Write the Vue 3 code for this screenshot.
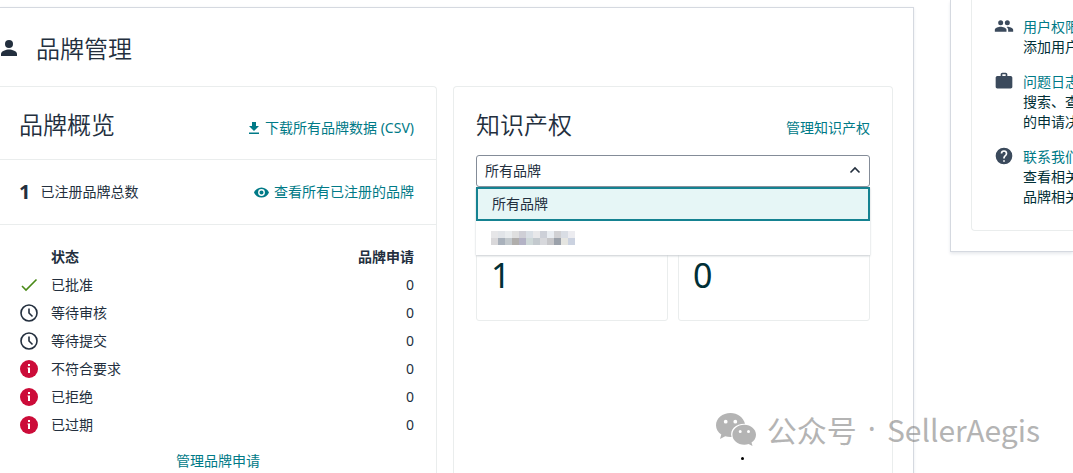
<template>
  <div class="page">
    <main class="panel">
      <header class="panel-header">
        <svg class="icon-person" viewBox="0 0 18 18"><circle cx="9" cy="5" r="4" /><path d="M1 17v-2c0-3 5-4.500 8-4.500s8 1.500 8 4.500v2z" /></svg>
        <h1>品牌管理</h1>
      </header>

      <div class="cards">
        <section class="card overview">
          <div class="card-row card-title">
            <h2>品牌概览</h2>
            <a href="#" class="link">
              <svg class="icon-download" viewBox="0 0 12 12"><path d="M4 0h4v4h3L6 9 1 4h3zM1 10.500h10V12H1z" /></svg>
              下载所有品牌数据 (CSV)
            </a>
          </div>
          <div class="card-row total">
            <p><strong>1</strong>已注册品牌总数</p>
            <a href="#" class="link">
              <svg class="icon-eye" viewBox="1 4 22 16"><path d="M12 4.500C7 4.500 2.730 7.610 1 12c1.730 4.390 6 7.500 11 7.500s9.270-3.110 11-7.500c-1.730-4.390-6-7.500-11-7.500zM12 17a5 5 0 1 1 0-10 5 5 0 0 1 0 10zm0-8a3 3 0 1 0 0 6 3 3 0 0 0 0-6z" /></svg>
              查看所有已注册的品牌
            </a>
          </div>
          <table>
            <thead>
              <tr>
                <th class="icon-cell"></th>
                <th>状态</th>
                <th class="count">品牌申请</th>
              </tr>
            </thead>
            <tbody>
              <tr v-for="row in statuses" :key="row.label">
                <td class="icon-cell">
                  <svg v-if="row.icon === 'check'" class="status-icon check" viewBox="0 0 18 18"><path d="M2 10l4 4L16.500 3.500" /></svg>
                  <svg v-else-if="row.icon === 'clock'" class="status-icon clock" viewBox="0 0 18 18"><circle cx="9" cy="9" r="8" /><path d="M9 4.500V9l3.500 3.500" /></svg>
                  <svg v-else class="status-icon info" viewBox="0 0 18 18"><circle cx="9" cy="9" r="9" /><path d="M8 4h2v2H8zM7.500 7.500H10V13H8V8.500h-.5z" /></svg>
                </td>
                <td>{{ row.label }}</td>
                <td class="count">{{ row.count }}</td>
              </tr>
            </tbody>
          </table>
          <a href="#" class="link manage">管理品牌申请</a>
        </section>

        <section class="card property">
          <div class="property-title">
            <h2>知识产权</h2>
            <a href="#" class="link">管理知识产权</a>
          </div>
          <div class="dropdown">
            <select v-model="brand" aria-label="品牌">
              <option value="all">所有品牌</option>
            </select>
            <svg class="chevron" viewBox="0 0 12 8"><path d="M1.500 6.500L6 2l4.500 4.500" /></svg>
            <ul class="menu" role="listbox">
              <li class="option selected" role="option" aria-selected="true">所有品牌</li>
              <li class="option" role="option" aria-selected="false">
                <svg class="mosaic" viewBox="0 0 12 2" shape-rendering="crispEdges">
                  <rect v-for="(color, i) in mosaic" :key="i" :x="i % 12" :y="Math.floor(i / 12)" width="1" height="1" :fill="color" />
                </svg>
              </li>
            </ul>
          </div>
          <div class="tiles">
            <div class="tile">1</div>
            <div class="tile">0</div>
          </div>
        </section>
      </div>
    </main>

    <aside class="sidebar">
      <ul class="help">
        <li v-for="item in helpItems" :key="item.title">
          <svg class="help-icon" viewBox="0 0 24 24"><path :d="item.icon" /></svg>
          <div>
            <a href="#" class="link">{{ item.title }}</a>
            <p v-for="line in item.lines" :key="line">{{ line }}</p>
          </div>
        </li>
      </ul>
    </aside>

    <div class="watermark">
      <svg viewBox="0 0 40 33">
        <path d="M14.500 0C6.500 0 0 5.400 0 12.200c0 3.800 2 7.200 5.300 9.400L4 26l5.200-2.700c1.900.6 4 .9 6.300.8C13.500 16.500 20 10.500 29 10.800 27.500 4.500 21.500 0 14.500 0zM9.700 6.800a1.900 1.900 0 1 1 0 3.800 1.900 1.900 0 0 1 0-3.800zm9.600 0a1.900 1.900 0 1 1 0 3.800 1.900 1.900 0 0 1 0-3.800z" />
        <path d="M28.300 11.800c-6.700 0-11.900 4.500-11.900 10s5.200 10 11.900 10c1.600 0 3-.2 4.300-.7L36.500 33l-1-3.400c2.800-1.800 4.500-4.700 4.500-7.800 0-5.500-5.200-10-11.700-10zm-4.100 5.300a1.500 1.500 0 1 1 0 3 1.500 1.500 0 0 1 0-3zm8.300 0a1.500 1.500 0 1 1 0 3 1.500 1.500 0 0 1 0-3z" />
      </svg>
      <span>公众号</span>
      <span class="dot">·</span>
      <span>SellerAegis</span>
    </div>
    <i class="pointer"></i>
  </div>
</template>

<script setup>
import { ref } from "vue";

const brand = ref("all");

const statuses = [
  { label: "已批准", count: 0, icon: "check" },
  { label: "等待审核", count: 0, icon: "clock" },
  { label: "等待提交", count: 0, icon: "clock" },
  { label: "不符合要求", count: 0, icon: "info" },
  { label: "已拒绝", count: 0, icon: "info" },
  { label: "已过期", count: 0, icon: "info" },
];

// masked brand name, two rows of twelve cells
const mosaic = [
  "#e6e6e8", "#e1e4e8", "#e9ecee", "#dfdfdf", "#cfcfd6", "#d9dfe5", "#e8e8ea", "#cdd0d8", "#e9edf2", "#d1d1d4", "#d9dde4", "#ececf0",
  "#d9d8da", "#a9b1bb", "#c2c8cc", "#b0aeac", "#b3b2c5", "#ced8d8", "#c3c9ce", "#d7d8dc", "#c6c6c9", "#9ba1aa", "#e5e5e1", "#cbd2e0",
];

const helpItems = [
  {
    title: "用户权限",
    lines: ["添加用户"],
    icon: "M16 11a3 3 0 1 0 0-6 3 3 0 0 0 0 6zM8 11a3 3 0 1 0 0-6 3 3 0 0 0 0 6zM8 13c-2.330 0-7 1.170-7 3.500V19h14v-2.500C15 14.170 10.330 13 8 13zM16 13l-1 .05c1.160.84 2 1.970 2 3.450V19h6v-2.500c0-2.330-4.670-3.500-7-3.500z",
  },
  {
    title: "问题日志",
    lines: ["搜索、查看", "的申请决定"],
    icon: "M20 6h-4V4c0-1.100-.9-2-2-2h-4c-1.100 0-2 .9-2 2v2H4c-1.100 0-2 .9-2 2v11c0 1.100.9 2 2 2h16c1.100 0 2-.9 2-2V8c0-1.100-.9-2-2-2zm-6 0h-4V4h4z",
  },
  {
    title: "联系我们",
    lines: ["查看相关", "品牌相关"],
    icon: "M12 2a10 10 0 1 0 0 20 10 10 0 0 0 0-20zm1 17h-2v-2h2zm2.070-7.750l-.9.920C13.450 12.900 13 13.500 13 15h-2v-.5c0-1.100.45-2.100 1.170-2.830l1.240-1.260c.37-.36.59-.86.59-1.410a2 2 0 0 0-4 0H8a4 4 0 0 1 8 0c0 .88-.36 1.680-.93 2.250z",
  },
];
</script>

<style>
body {
  margin: 0;
  background: #fff;
}
</style>

<style scoped>
.page {
  position: relative;
  display: flex;
  align-items: flex-start;
  gap: 36px;
  height: 100vh;
  overflow: hidden;
  color: #232f3e;
  font-family: "Noto Sans", "Noto Sans CJK SC", sans-serif;
  font-size: 14px;
  line-height: 20px;
}

h1,
h2 {
  margin: 0;
  font-family: "Noto Sans CJK SC", sans-serif;
  font-size: 24px;
  font-weight: 350;
  line-height: 32px;
}

p,
ul {
  margin: 0;
  padding: 0;
  list-style: none;
}

svg {
  fill: currentColor;
}

.link {
  color: #007a87;
  text-decoration: none;
}

.panel {
  display: flex;
  flex: 1;
  flex-direction: column;
  box-sizing: border-box;
  min-height: 100vh;
  margin-top: 7px;
  padding-right: 20px;
  border: 1px solid #d5d9e0;
  border-width: 1px 1px 0 0;
  box-shadow: 0 1px 3px #e8eaee;
}

.panel-header {
  display: flex;
  align-items: center;
  gap: 18px;
  box-sizing: border-box;
  height: 78px;
  padding-top: 2px;
}

.icon-person {
  width: 18px;
  height: 18px;
}

.cards {
  display: grid;
  flex: 1;
  grid-template-columns: 437fr 440fr;
  gap: 16px;
}

.card {
  box-sizing: border-box;
  border: 1px solid #eaeded;
  border-bottom: 0;
  border-radius: 4px 4px 0 0;
}

.overview {
  border-left: 0;
  border-top-left-radius: 0;
}

.card-row {
  display: flex;
  align-items: center;
  justify-content: space-between;
  box-sizing: border-box;
  padding: 0 22px 0 19px;
  border-bottom: 1px solid #eaeded;
}

.card-row .link {
  display: flex;
  align-items: center;
  gap: 5px;
}

.card-title {
  height: 73px;
  padding-top: 2px;
}

.card-title .link,
.property-title .link {
  margin-top: 8px;
}

.total {
  height: 65px;
}

.total p {
  display: flex;
  align-items: center;
  gap: 10px;
}

.total strong {
  font-size: 20px;
}

.icon-download {
  width: 12px;
  height: 12px;
}

.icon-eye {
  width: 15px;
  height: 11px;
}

table {
  width: 100%;
  margin-top: 18px;
  border-collapse: collapse;
}

th,
td {
  height: 28px;
  padding: 0;
  text-align: left;
}

.icon-cell {
  width: 31px;
  padding-left: 20px;
}

.count {
  padding-right: 22px;
  text-align: right;
}

.status-icon {
  display: block;
  width: 18px;
  height: 18px;
}

.check,
.clock {
  fill: none;
  stroke: currentColor;
  stroke-width: 1.6;
}

.check {
  color: #4a8a18;
}

.info circle {
  fill: #cc0c39;
}

.info path {
  fill: #fff;
}

.manage {
  display: block;
  margin-top: 12px;
  text-align: center;
}

.property {
  padding: 21px 22px 0;
}

.property-title {
  display: flex;
  align-items: center;
  justify-content: space-between;
  height: 32px;
}

.dropdown {
  position: relative;
  margin-top: 15px;
}

.dropdown select {
  display: block;
  width: 100%;
  height: 32px;
  padding: 0 8px;
  border: 1px solid #848c98;
  border-radius: 3px;
  appearance: none;
  background: #fff;
  color: inherit;
  font: inherit;
}

.chevron {
  position: absolute;
  top: 11px;
  right: 9px;
  width: 12px;
  height: 8px;
  fill: none;
  stroke: #232f3e;
  stroke-width: 1.6;
}

.menu {
  position: absolute;
  top: 100%;
  right: 0;
  left: 0;
  background: #fff;
  box-shadow: 0 1px 2px #c8ccd0;
}

.option {
  display: flex;
  align-items: center;
  box-sizing: border-box;
  height: 34px;
  padding: 0 15px;
}

.selected {
  padding: 0 14px;
  border: 2px solid #158291;
  background: #e6f6f6;
}

.mosaic {
  width: 84px;
  height: 14px;
}

.tiles {
  display: grid;
  grid-template-columns: 1fr 1fr;
  gap: 10px;
  margin-top: 16px;
}

.tile {
  padding: 47px 14px 21px;
  border: 1px solid #eaeded;
  border-radius: 3px;
  color: #002f36;
  font-size: 34px;
  line-height: 48px;
}

.sidebar {
  box-sizing: border-box;
  width: 123px;
  padding: 0 0 20px 20px;
  border: 1px solid #d5d9e0;
  border-width: 0 0 1px 1px;
  box-shadow: 0 2px 3px #e8eaee;
}

.help {
  display: grid;
  gap: 14px;
  padding: 16px 0 23px 22px;
  overflow: hidden;
  border: 1px solid #eaeded;
  border-width: 0 0 1px 1px;
  border-bottom-left-radius: 4px;
  white-space: nowrap;
}

.help li {
  display: flex;
  gap: 9px;
}

.help .link {
  display: block;
  line-height: 21px;
}

.help p {
  color: #002f36;
}

.help-icon {
  flex: none;
  width: 20px;
  height: 20px;
  color: #3b4a5c;
}

.watermark {
  position: absolute;
  right: 33px;
  bottom: 24px;
  display: flex;
  align-items: center;
  gap: 11px;
  color: #777;
  font-family: "Noto Sans CJK SC", sans-serif;
  font-size: 30px;
  line-height: 40px;
  opacity: 0.55;
}

.watermark svg {
  width: 40px;
  height: 33px;
}

.dot {
  font-family: "Noto Sans", sans-serif;
}

.pointer {
  position: absolute;
  top: 457px;
  left: 741px;
  width: 3px;
  height: 3px;
  border-radius: 50%;
  background: #000;
}
</style>
